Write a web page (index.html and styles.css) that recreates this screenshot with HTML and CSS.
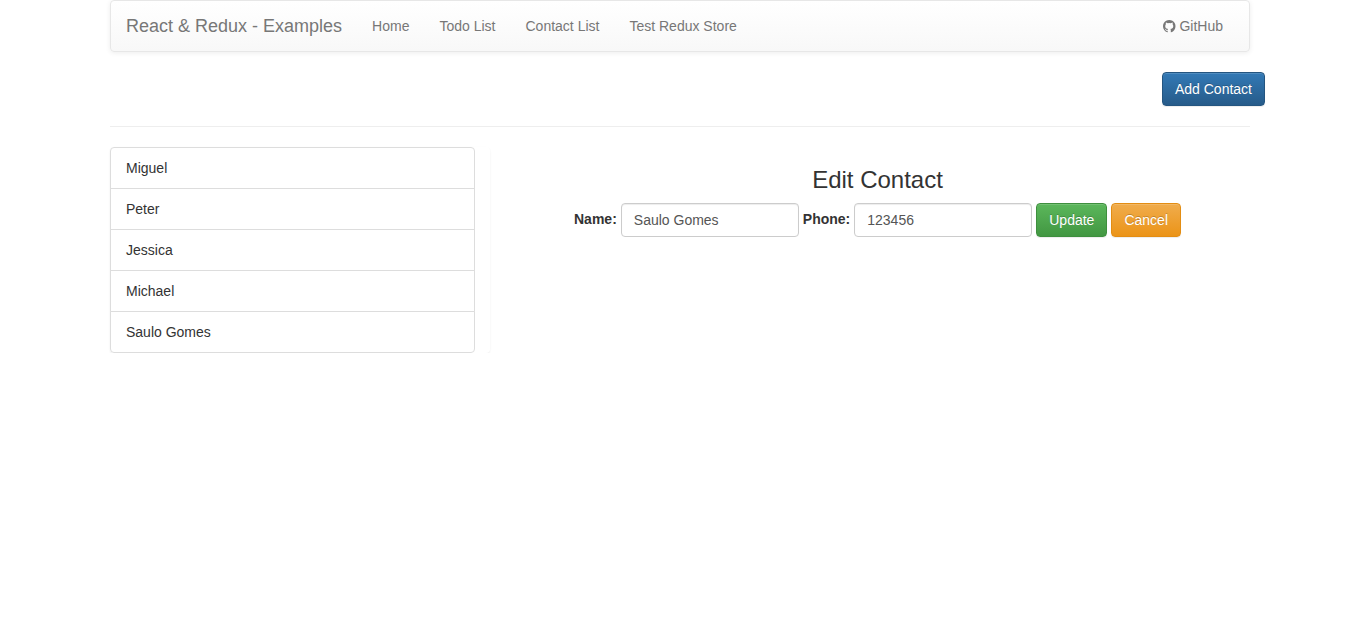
FILE: index.html
```html
<!DOCTYPE html>
<html lang="en">
<head>
<meta charset="utf-8">
<title>React &amp; Redux - Examples</title>
<link rel="stylesheet" href="styles.css">
</head>
<body>
<div class="container">
  <nav class="navbar">
    <a class="brand" href="#">React &amp; Redux - Examples</a>
    <ul class="nav">
      <li><a href="#">Home</a></li>
      <li><a href="#">Todo List</a></li>
      <li><a href="#">Contact List</a></li>
      <li><a href="#">Test Redux Store</a></li>
    </ul>
    <a class="github" href="#"><svg class="icon" viewBox="0 0 1536 1536" aria-hidden="true"><path fill="currentColor" d="M768 0q209 0 385.500 103t279.500 279.500 103 385.500q0 251-146.500 451.500t-378.500 277.500q-27 5-40-7t-13-30q0-3 .5-76.500t.5-134.500q0-97-52-142 57-6 102.500-18t94-39 81-66.500 53-105 20.500-150.500q0-119-79-206 37-91-8-204-28-9-81 11t-92 44l-38 24q-93-26-192-26t-192 26q-16-11-42.500-27t-83.500-38.500-85-13.500q-45 113-8 204-79 87-79 206 0 85 20.500 150t52.500 105 80.500 67 94 39 102.500 18q-39 36-49 103-21 10-45 15t-57 5-65.500-21.500-55.500-62.500q-19-32-48.500-52t-49.500-24l-20-3q-21 0-29 4.500t-5 11.500 9 14 13 12l7 5q22 10 43.500 38t31.500 51l10 23q13 38 44 61.500t67 30 69.500 7 55.500-3.500l23-4q0 38 .5 88.500t.5 54.500q0 18-13 30t-40 7q-232-77-378.500-277.500t-146.500-451.500q0-209 103-385.500t279.500-279.500 385.500-103z"/></svg> GitHub</a>
  </nav>
  <div class="toolbar"><button class="btn primary">Add Contact</button></div>
  <hr class="divider">
  <div class="row">
    <div class="list-column">
      <ul class="list-group">
        <li>Miguel</li>
        <li>Peter</li>
        <li>Jessica</li>
        <li>Michael</li>
        <li>Saulo Gomes</li>
      </ul>
    </div>
    <div class="editor">
      <h3 class="title">Edit Contact</h3>
      <form class="form">
        <label for="name">Name:</label>
        <input id="name" class="field" type="text" value="Saulo Gomes">
        <label for="phone">Phone:</label>
        <input id="phone" class="field" type="text" value="123456">
        <button type="button" class="btn success">Update</button>
        <button type="button" class="btn warning">Cancel</button>
      </form>
    </div>
  </div>
</div>
</body>
</html>
```
FILE: styles.css
```css
* { box-sizing: border-box; }
body {
  margin: 0;
  font: 14px/20px "Liberation Sans", Arial, sans-serif;
  color: #333;
  background: #fff;
}
a { text-decoration: none; color: #777; }
.container { width: 1140px; margin: 0 auto; }
.navbar {
  display: flex;
  height: 52px;
  margin-bottom: 20px;
  padding: 0 11px 0 0;
  border: 1px solid #e7e7e7;
  border-radius: 4px;
  background: linear-gradient(to bottom, #fff 0%, #f8f8f8 100%);
  box-shadow: inset 0 1px 0 rgba(255,255,255,.15), 0 1px 5px rgba(0,0,0,.075);
  text-shadow: 0 1px 0 rgba(255,255,255,.25);
}
.brand { padding: 15px; font-size: 18px; }
.nav { display: flex; margin: 0; padding: 0; list-style: none; }
.nav a, .github { display: block; padding: 15px; }
.github { margin-left: auto; }
.icon { width: 12.5px; height: 12.5px; vertical-align: -1.5px; }
.toolbar { display: flex; justify-content: flex-end; margin-right: -15px; }
.btn {
  height: 34px;
  padding: 6px 12px;
  border: 1px solid;
  border-radius: 4px;
  font: inherit;
  color: #fff;
  text-shadow: 0 -1px 0 rgba(0,0,0,.2);
  box-shadow: inset 0 1px 0 rgba(255,255,255,.15), 0 1px 1px rgba(0,0,0,.075);
}
.primary { border-color: #245580; background: linear-gradient(#337ab7, #265a88) border-box; }
.success { border-color: #3e8f3e; background: linear-gradient(#5cb85c, #419641) border-box; }
.warning { border-color: #e38d13; background: linear-gradient(#f0ad4e, #eb9316) border-box; }
.divider { height: 0; margin: 20px 0; border: 0; border-top: 1px solid #eee; }
.row { display: flex; align-items: flex-start; }
.list-column {
  width: 380px;
  padding-right: 15px;
  border-radius: 4px;
  box-shadow: 0 1px 2px rgba(0,0,0,.075);
}
.list-group {
  margin: 0;
  padding: 0;
  list-style: none;
}
.list-group li { padding: 10px 15px; margin-bottom: -1px; border: 1px solid #ddd; background: #fff; }
.list-group li:first-child { border-radius: 4px 4px 0 0; }
.list-group li:last-child { margin-bottom: 0; border-radius: 0 0 4px 4px; }
.editor { width: 775px; margin-right: -15px; text-align: center; }
.title { margin: 20px 0 10px; font-size: 24px; line-height: 26px; font-weight: 500; }
.form { display: flex; justify-content: center; gap: 4px; }
.form label { padding-top: 6px; font-weight: 700; }
.field {
  width: 178px;
  height: 34px;
  padding: 6px 12px;
  border: 1px solid #ccc;
  border-radius: 4px;
  font: inherit;
  color: #555;
  background: #fff;
  box-shadow: inset 0 1px 1px rgba(0,0,0,.075);
}
```
